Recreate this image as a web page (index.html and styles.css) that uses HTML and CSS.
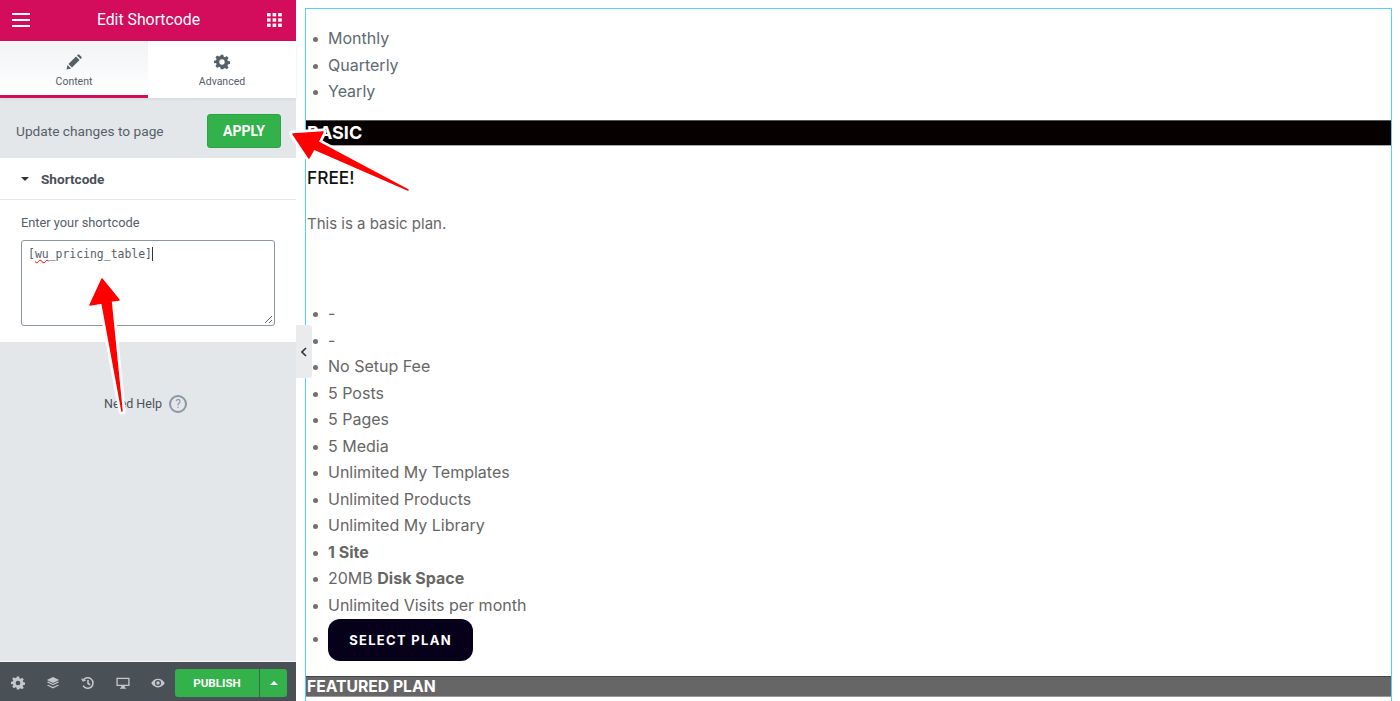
FILE: index.html
```html
<!DOCTYPE html>
<html lang="en">
<head>
<meta charset="utf-8">
<title>Edit Shortcode</title>
<link rel="stylesheet" href="styles.css">
</head>
<body>
<div class="app">
  <aside class="panel">
    <header class="topbar">
      <svg class="ico-menu" viewBox="0 0 18 14"><path d="M0 1h18M0 7h18M0 13h18" stroke="#fff" stroke-width="2.2" fill="none"/></svg>
      <h1 class="title">Edit Shortcode</h1>
      <svg class="ico-grid" viewBox="0 0 15 14" fill="#fff"><rect x="0" y="0" width="3.6" height="3.4"/><rect x="5.6" y="0" width="3.6" height="3.4"/><rect x="11.2" y="0" width="3.6" height="3.4"/><rect x="0" y="5.3" width="3.6" height="3.4"/><rect x="5.6" y="5.3" width="3.6" height="3.4"/><rect x="11.2" y="5.3" width="3.6" height="3.4"/><rect x="0" y="10.6" width="3.6" height="3.4"/><rect x="5.6" y="10.6" width="3.6" height="3.4"/><rect x="11.2" y="10.6" width="3.6" height="3.4"/></svg>
    </header>
    <nav class="tabs">
      <div class="tab tab-active">
        <svg class="tab-ico" viewBox="0 0 16 16" fill="#556068"><path d="M0.5 15.5l1-4.6 3.6 3.6zM2.4 10l7.6-7.6 3.6 3.6-7.6 7.6zM11 1.4l1-1q.5-.4 1 0l2.600 2.600q.4.5 0 1l-1 1z"/></svg>
        <span>Content</span>
      </div>
      <div class="tab">
        <svg class="tab-ico" viewBox="0 0 24 24" fill="#556068"><path d="M10 1h4l.6 3.100 1.900.8 2.600-1.800 2.800 2.800-1.800 2.600.8 1.900 3.100.6v4l-3.100.6-.8 1.900 1.800 2.600-2.800 2.800-2.600-1.800-1.900.8L14 23h-4l-.6-3.100-1.900-.8-2.600 1.800-2.800-2.800 1.800-2.600-.8-1.900L0 14v-4l3.100-.6.8-1.900L2.100 4.900l2.800-2.800 2.600 1.800 1.900-.8zM12 8a4 4 0 1 0 0 8 4 4 0 0 0 0-8z" fill-rule="evenodd"/></svg>
        <span>Advanced</span>
      </div>
    </nav>
    <div class="apply-row">
      <span class="apply-label">Update changes to page</span>
      <button class="apply-btn">APPLY</button>
    </div>
    <section class="section">
      <div class="section-head"><span class="caret"></span><span>Shortcode</span></div>
      <div class="section-body">
        <label class="field-label">Enter your shortcode</label>
        <div class="code-box"><span class="code-text"><span class="misspelled">wu</span></span>
          <svg class="grip" viewBox="0 0 9 9"><path d="M1 8l7-7M5 8l3-3" stroke="#666" stroke-width="1" fill="none"/></svg>
        </div>
      </div>
    </section>
    <div class="help">
      <span>Need Help</span>
      <span class="help-ico">?</span>
    </div>
    <footer class="bottombar">
      <div class="foot-icons">
        <svg class="foot-ico" viewBox="0 0 24 24" fill="#c3c8cc"><path d="M10 1h4l.6 3.100 1.900.8 2.600-1.800 2.800 2.800-1.800 2.600.8 1.900 3.100.6v4l-3.100.6-.8 1.900 1.800 2.600-2.800 2.800-2.600-1.800-1.900.8L14 23h-4l-.6-3.100-1.900-.8-2.600 1.800-2.800-2.800 1.800-2.600-.8-1.900L0 14v-4l3.100-.6.8-1.900L2.100 4.900l2.800-2.800 2.600 1.800 1.900-.8zM12 8a4 4 0 1 0 0 8 4 4 0 0 0 0-8z" fill-rule="evenodd"/></svg>
        <svg class="foot-ico" viewBox="0 0 16 16" fill="#c3c8cc"><path d="M8 1l7 3.500-7 3.500-7-3.500z"/><path d="M1 7.200l1.500-.8L8 9.200l5.500-2.800 1.500.8-7 3.500z"/><path d="M1 10.700l1.500-.8L8 12.700l5.500-2.800 1.500.8L8 14.200z"/></svg>
        <svg class="foot-ico" viewBox="0 0 16 16" fill="none" stroke="#c3c8cc" stroke-width="1.800"><path d="M2.500 5A6 6 0 1 1 2.500 11"/><path d="M8 4.500V8.500l2.500 1.500"/><path d="M0.800 2.800l1.500 3 3-1" stroke-width="1.300"/></svg>
        <svg class="foot-ico" viewBox="0 0 16 16" fill="#c3c8cc"><path d="M0.500 2h15v9.500h-15zM2 3.500v6.500h12V3.500zM6 11.500h4v2h1.500v1h-7v-1H6z" fill-rule="evenodd"/></svg>
        <svg class="foot-ico" viewBox="0 0 16 12" fill="#c3c8cc"><path d="M8 1c3.500 0 6.300 2.200 7.700 5C14.300 8.800 11.500 11 8 11S1.700 8.800.3 6C1.700 3.200 4.500 1 8 1zm0 1.500a3.500 3.500 0 1 0 0 7 3.500 3.500 0 0 0 0-7zM8 4a2 2 0 1 1 0 4 2 2 0 0 1 0-4z" fill-rule="evenodd"/></svg>
      </div>
      <div class="publish">
        <span class="publish-main">PUBLISH</span>
        <span class="publish-more"><span class="caret-up"></span></span>
      </div>
    </footer>
  </aside>
  <div class="collapse">
    <svg viewBox="0 0 6 10" class="collapse-ico"><path d="M5 1L1 5l4 4" stroke="#333" stroke-width="1.600" fill="none"/></svg>
  </div>
  <main class="preview">
    <div class="frame">
      <ul class="list list-top">
        <li>Monthly</li>
        <li>Quarterly</li>
        <li>Yearly</li>
      </ul>
      <h2 class="plan-head plan-basic">BASIC</h2>
      <h3 class="price">FREE!</h3>
      <p class="desc">This is a basic plan.</p>
      <ul class="list list-features">
        <li>-</li>
        <li>-</li>
        <li>No Setup Fee</li>
        <li>5 Posts</li>
        <li>5 Pages</li>
        <li>5 Media</li>
        <li>Unlimited My Templates</li>
        <li>Unlimited Products</li>
        <li>Unlimited My Library</li>
        <li><b>1 Site</b></li>
        <li>20MB <b>Disk Space</b></li>
        <li>Unlimited Visits per month</li>
        <li class="li-btn"><a class="select">SELECT PLAN</a></li>
      </ul>
      <h2 class="plan-head plan-featured">FEATURED PLAN</h2>
    </div>
  </main>
</div>
<svg class="arrows" viewBox="0 0 1400 701" width="1400" height="701">
  <g class="halo">
    <path d="M408 190L318 142 323 132 293 134 309 158 314 149z"/>
    <path d="M122 411L111 301 119 300 102 279 90 305 102 303z"/>
  </g>
  <g class="arrow">
    <path d="M408 190L318 142 323 132 293 134 309 158 314 149z"/>
    <path d="M122 411L111 301 119 300 102 279 90 305 102 303z"/>
  </g>
</svg>
</body>
</html>
```
FILE: styles.css
```css
* { box-sizing: border-box; }
html, body { margin: 0; height: 100%; overflow: hidden; background: #fff; }
body { font-family: Roboto, "Liberation Sans", sans-serif; position: relative; }
.app { display: flex; height: 701px; width: 1400px; }

.panel { width: 296px; flex: none; background: #e4e7ea; display: flex; flex-direction: column; }
.topbar { height: 41px; background: #d30c5c; display: flex; align-items: center; justify-content: space-between; padding: 0 14px 2px 12px; flex: none; }
.ico-menu { width: 18px; height: 14px; }
.ico-grid { width: 15px; height: 14px; }
.title { margin: 0; color: #fff; font-size: 15.800px; font-weight: 400; }

.tabs { display: flex; height: 57px; background: #fff; flex: none; box-shadow: 0 1px 3px rgba(0,0,0,.08); }
.tab { flex: 1; display: flex; flex-direction: column; align-items: center; padding-top: 13px; font-size: 10.500px; color: #556068; gap: 5px; }
.tab-active { background: linear-gradient(180deg, #f1f3f5, #fff); border-bottom: 3px solid #d30c5c; }
.tab-ico { width: 16px; height: 16px; }

.apply-row { height: 60px; display: flex; align-items: center; justify-content: space-between; padding: 6px 15px 0 16px; flex: none; }
.apply-label { font-size: 13.700px; color: #556068; }
.apply-btn { width: 74px; height: 34px; background: #33b14a; border: 1px solid #2ea343; border-radius: 3px; color: #fff; font: 700 14px Roboto, sans-serif; padding: 0; }

.section { background: #fff; flex: none; height: 184px; }
.section-head { height: 42px; padding: 1px 0 0 21px; display: flex; align-items: center; gap: 12px; font-size: 13.600px; font-weight: 700; color: #495157; border-bottom: 1px solid #e4e7ea; }
.caret { width: 0; height: 0; border-left: 4.500px solid transparent; border-right: 4.500px solid transparent; border-top: 4.500px solid #333; }
.section-body { padding: 15px 21px 0; }
.field-label { display: block; font-size: 12.800px; color: #556068; margin-bottom: 9px; line-height: 16px; }
.code-box { position: relative; height: 86px; border: 1px solid #8a97a3; border-radius: 3px; padding: 5px 6px; background: #fff; font: 11.450px/16px "DejaVu Sans Mono", monospace; color: #556068; }
.code-text::before { content: "["; }
.code-text::after { content: "_pricing_table]"; border-right: 1px solid #333; }
.misspelled { text-decoration: underline wavy #e00; text-decoration-thickness: 1px; }
.grip { position: absolute; right: 1px; bottom: 1px; width: 9px; height: 9px; }

.help { flex: 1; display: flex; justify-content: center; align-items: flex-start; gap: 7px; padding: 54px 5px 0 0; font-size: 12.500px; color: #495157; }
.help-ico { width: 18px; height: 18px; border: 2px solid #8a97a3; border-radius: 50%; display: flex; align-items: center; justify-content: center; font-size: 12px; color: #8a97a3; margin-top: -1px; }

.bottombar { height: 40px; background: #495157; display: flex; align-items: center; justify-content: space-between; padding: 3px 9px 0 11px; flex: none; border-top: 1px solid #f7f7f8; }
.foot-icons { display: flex; align-items: center; gap: 21px; }
.foot-ico { width: 14px; height: 14px; flex: none; }
.publish { display: flex; height: 28px; background: #33b14a; border-radius: 3px; color: #fff; font-size: 11.600px; font-weight: 700; }
.publish-main { width: 85px; display: flex; align-items: center; justify-content: center; border-right: 1px solid #3a6b49; }
.publish-more { width: 27px; display: flex; align-items: center; justify-content: center; }
.caret-up { width: 0; height: 0; border-left: 4px solid transparent; border-right: 4px solid transparent; border-bottom: 4px solid #fff; }

.collapse { position: absolute; left: 296px; top: 325px; width: 16px; height: 53px; background: #e9ebed; border-radius: 0 3px 3px 0; display: flex; align-items: center; justify-content: center; }
.collapse-ico { width: 6px; height: 10px; }

.preview { flex: 1; padding: 8px 8px 0 9px; min-width: 0; }
.frame { border: 1px solid #55d0fa; border-bottom: 0; height: 693px; font-family: Inter, "Open Sans", sans-serif; font-size: 16px; color: #5d6a6f; overflow: hidden; }
.list { margin: 0; padding: 0 0 0 22px; list-style: none; line-height: 26.500px; }
.list li::before { content: ""; display: inline-block; width: 5px; height: 5px; border-radius: 50%; background: #707070; margin: 0 10px 0 -15px; vertical-align: 2px; }
.list-top { padding-top: 16px; height: 111px; }
.plan-head { margin: 0; height: 26px; font-size: 18px; font-weight: 700; line-height: 23px; color: #fff; padding-left: 1px; border-top: 1px solid #555; border-bottom: 1px solid #aaa; }
.plan-basic { background: #060000; }
.plan-featured { background: #666; font-size: 15.700px; height: 21px; line-height: 19px; margin-top: 15px; border-color: #444 #444 #999; }
.price { margin: 21px 0 0 1px; font-size: 17.300px; font-weight: 500; color: #111; line-height: 22px; }
.desc { margin: 24px 0 0 1px; font-size: 15px; line-height: 22px; color: #666; }
.list-features { margin-top: 65px; color: #666; }
.li-btn { padding-top: 1px; }
.select { display: inline-block; vertical-align: middle; width: 145px; height: 42px; line-height: 42px; text-align: center; background: #06001a; color: #fff; font-size: 13px; font-weight: 700; letter-spacing: 1.300px; border-radius: 12px; }
.list b { font-weight: 700; }

.arrows { position: absolute; left: 0; top: 0; pointer-events: none; }
.halo path { fill: #fff; stroke: #fff; stroke-width: 7px; stroke-linejoin: round; }
.arrow path { fill: #fe0000; stroke: #fe0000; stroke-width: 1.500px; stroke-linejoin: round; }
```
